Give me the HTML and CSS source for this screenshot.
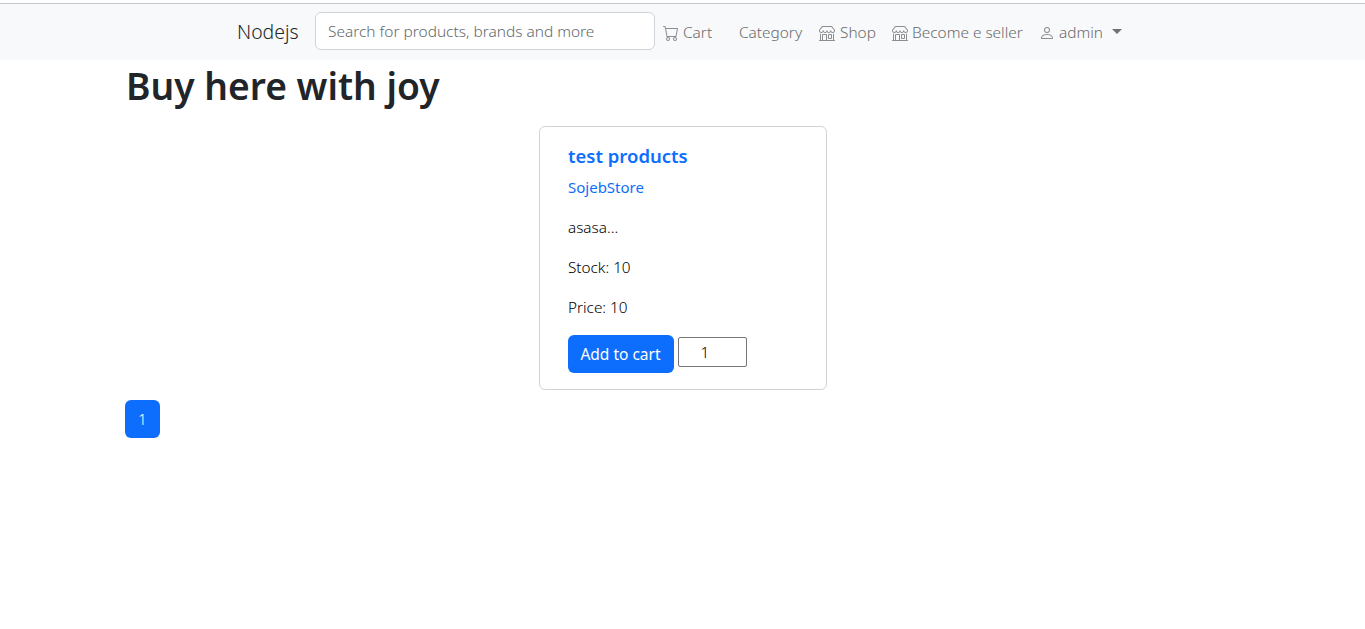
FILE: index.html
```html
<!DOCTYPE html>
<html lang="en">
<head>
<meta charset="utf-8">
<title>Nodejs</title>
<link rel="stylesheet" href="styles.css">
</head>
<body>
<nav class="navbar">
  <a class="brand" href="#">Nodejs</a>
  <input class="search" type="text" placeholder="Search for products, brands and more">
  <a class="link link-cart" href="#"><svg class="icon" viewBox="0 0 16 16"><path d="M0 1.5A.5.5 0 0 1 .5 1H2a.5.5 0 0 1 .485.379L2.89 3H14.5a.5.5 0 0 1 .491.592l-1.5 8A.5.5 0 0 1 13 12H4a.5.5 0 0 1-.491-.408L2.01 3.607 1.61 2H.5a.5.5 0 0 1-.5-.5zM3.102 4l1.313 7h8.17l1.313-7H3.102zM5 12a2 2 0 1 0 0 4 2 2 0 0 0 0-4zm7 0a2 2 0 1 0 0 4 2 2 0 0 0 0-4zm-7 1a1 1 0 1 1 0 2 1 1 0 0 1 0-2zm7 0a1 1 0 1 1 0 2 1 1 0 0 1 0-2z"/></svg>Cart</a>
  <a class="link link-category" href="#">Category</a>
  <a class="link link-shop" href="#"><svg class="icon" viewBox="0 0 16 16"><path d="M2.97 1.35A1 1 0 0 1 3.73 1h8.54a1 1 0 0 1 .76.35l2.609 3.044A1.5 1.5 0 0 1 16 5.37v.255a2.375 2.375 0 0 1-4.25 1.458A2.371 2.371 0 0 1 9.875 8 2.37 2.37 0 0 1 8 7.083 2.37 2.37 0 0 1 6.125 8a2.37 2.37 0 0 1-1.875-.917A2.375 2.375 0 0 1 0 5.625V5.37a1.5 1.5 0 0 1 .361-.976l2.61-3.045zm1.78 4.275a1.375 1.375 0 0 0 2.75 0 .5.5 0 0 1 1 0 1.375 1.375 0 0 0 2.75 0 .5.5 0 0 1 1 0 1.375 1.375 0 1 0 2.75 0V5.37a.5.5 0 0 0-.12-.325L12.27 2H3.73L1.12 5.045A.5.5 0 0 0 1 5.37v.255a1.375 1.375 0 0 0 2.75 0 .5.5 0 0 1 1 0zM1.5 8.5A.5.5 0 0 1 2 9v6h1v-5a1 1 0 0 1 1-1h3a1 1 0 0 1 1 1v5h6V9a.5.5 0 0 1 1 0v6h.5a.5.5 0 0 1 0 1H.5a.5.5 0 0 1 0-1H1V9a.5.5 0 0 1 .5-.5zM4 15h3v-5H4v5zm5-5a1 1 0 0 1 1-1h2a1 1 0 0 1 1 1v3a1 1 0 0 1-1 1h-2a1 1 0 0 1-1-1v-3zm3 0h-2v3h2v-3z"/></svg>Shop</a>
  <a class="link link-seller" href="#"><svg class="icon" viewBox="0 0 16 16"><path d="M2.97 1.35A1 1 0 0 1 3.73 1h8.54a1 1 0 0 1 .76.35l2.609 3.044A1.5 1.5 0 0 1 16 5.37v.255a2.375 2.375 0 0 1-4.25 1.458A2.371 2.371 0 0 1 9.875 8 2.37 2.37 0 0 1 8 7.083 2.37 2.37 0 0 1 6.125 8a2.37 2.37 0 0 1-1.875-.917A2.375 2.375 0 0 1 0 5.625V5.37a1.5 1.5 0 0 1 .361-.976l2.61-3.045zm1.78 4.275a1.375 1.375 0 0 0 2.75 0 .5.5 0 0 1 1 0 1.375 1.375 0 0 0 2.75 0 .5.5 0 0 1 1 0 1.375 1.375 0 1 0 2.75 0V5.37a.5.5 0 0 0-.12-.325L12.27 2H3.73L1.12 5.045A.5.5 0 0 0 1 5.37v.255a1.375 1.375 0 0 0 2.75 0 .5.5 0 0 1 1 0zM1.5 8.5A.5.5 0 0 1 2 9v6h1v-5a1 1 0 0 1 1-1h3a1 1 0 0 1 1 1v5h6V9a.5.5 0 0 1 1 0v6h.5a.5.5 0 0 1 0 1H.5a.5.5 0 0 1 0-1H1V9a.5.5 0 0 1 .5-.5zM4 15h3v-5H4v5zm5-5a1 1 0 0 1 1-1h2a1 1 0 0 1 1 1v3a1 1 0 0 1-1 1h-2a1 1 0 0 1-1-1v-3zm3 0h-2v3h2v-3z"/></svg>Become e seller</a>
  <a class="link link-user" href="#"><svg class="icon" viewBox="0 0 16 16"><path d="M8 8a3 3 0 1 0 0-6 3 3 0 0 0 0 6zm2-3a2 2 0 1 1-4 0 2 2 0 0 1 4 0zm4 8c0 1-1 1-1 1H3s-1 0-1-1 1-4 6-4 6 3 6 4zm-1-.004c-.001-.246-.154-.986-.832-1.664C11.516 10.68 10.289 10 8 10c-2.29 0-3.516.68-4.168 1.332-.678.678-.83 1.418-.832 1.664h10z"/></svg>admin<span class="caret"></span></a>
</nav>
<main class="page">
  <h1 class="title">Buy here with joy</h1>
  <div class="products">
    <article class="card">
      <a class="card-title" href="#">test products</a>
      <a class="store" href="#">SojebStore</a>
      <p class="line">asasa...</p>
      <p class="line">Stock: 10</p>
      <p class="line">Price: 10</p>
      <div class="buy">
        <button class="btn" type="button">Add to cart</button>
        <input class="qty" type="text" value="1">
      </div>
    </article>
  </div>
  <a class="page-btn" href="#">1</a>
</main>
</body>
</html>
```
FILE: styles.css
```css
* { box-sizing: border-box; }

html, body { margin: 0; padding: 0; }

body {
  padding-top: 3px;
  background: #fff;
  color: #212529;
  font-family: "Noto Sans", "Open Sans", sans-serif;
  font-size: 15.4px;
  font-weight: 300;
  line-height: 24px;
}

a { text-decoration: none; }

.navbar {
  display: flex;
  align-items: center;
  height: 57px;
  padding-left: 237px;
  background: #f8f9fa;
  border-top: 1px solid #c6c6c6;
}

.brand {
  width: 78px;
  color: #212529;
  font-size: 19.4px;
}

.search {
  width: 340px;
  height: 38px;
  margin-top: -2px;
  padding: 0 12px;
  border: 1px solid #ced4da;
  border-radius: 6px;
  background: #fff;
  font: inherit;
  font-size: 15.45px;
  color: #212529;
}

.search::placeholder { color: #62696f; opacity: 1; }

.link {
  display: flex;
  align-items: center;
  padding-top: 1px;
  color: #696b6d;
  white-space: nowrap;
}

.icon {
  width: 16px;
  height: 16px;
  margin-right: 4px;
  fill: #8b8d8f;
}

.link-cart { margin-left: 8px; width: 76px; }
.link-category { width: 80px; }
.link-shop { width: 73px; }
.link-shop .icon { margin-right: 5px; }
.link-seller { width: 148px; }
.link-user .icon { margin-left: -1px; }

.caret {
  width: 0;
  height: 0;
  margin-left: 9px;
  margin-top: -3px;
  border-top: 5px solid #6f7173;
  border-left: 5px solid transparent;
  border-right: 5px solid transparent;
}

.page {
  display: flex;
  flex-direction: column;
  padding: 0 125px;
}

.title {
  margin: -1px 0 1px 1px;
  font-size: 37.2px;
  font-weight: 600;
  line-height: 54px;
}

.products {
  display: flex;
  justify-content: center;
  margin-top: 12px;
}

.card {
  display: flex;
  flex-direction: column;
  width: 288px;
  height: 264px;
  padding: 16px 28.5px 0;
  border: 1px solid #d3d3d3;
  border-radius: 6px;
}

.card-title {
  color: #0d6efd;
  font-size: 18.5px;
  font-weight: 600;
  line-height: 26px;
}

.store {
  margin-top: 6px;
  color: #0d6efd;
  font-size: 15px;
  font-weight: 400;
  line-height: 24px;
}

.line {
  margin: 16px 0 0;
  color: #000;
  font-size: 15.3px;
  line-height: 24px;
}

.buy {
  display: flex;
  align-items: flex-start;
  gap: 4px;
  margin: 16px 0 0 -0.5px;
}

.btn {
  width: 106px;
  height: 38px;
  padding: 0;
  border: 0;
  border-radius: 6px;
  background: #0d6efd;
  color: #fff;
  font: inherit;
  font-size: 15.5px;
  font-weight: 400;
}

.qty {
  width: 69px;
  height: 30px;
  margin-top: 2px;
  padding: 0 0 0 22px;
  border: 1px solid #767676;
  border-radius: 2px;
  font: inherit;
  color: #000;
}

.page-btn {
  display: flex;
  align-items: center;
  justify-content: center;
  width: 35px;
  height: 38px;
  margin-top: 10px;
  padding-top: 1px;
  border-radius: 6px;
  background: #0d6efd;
  color: #fff;
}
```
